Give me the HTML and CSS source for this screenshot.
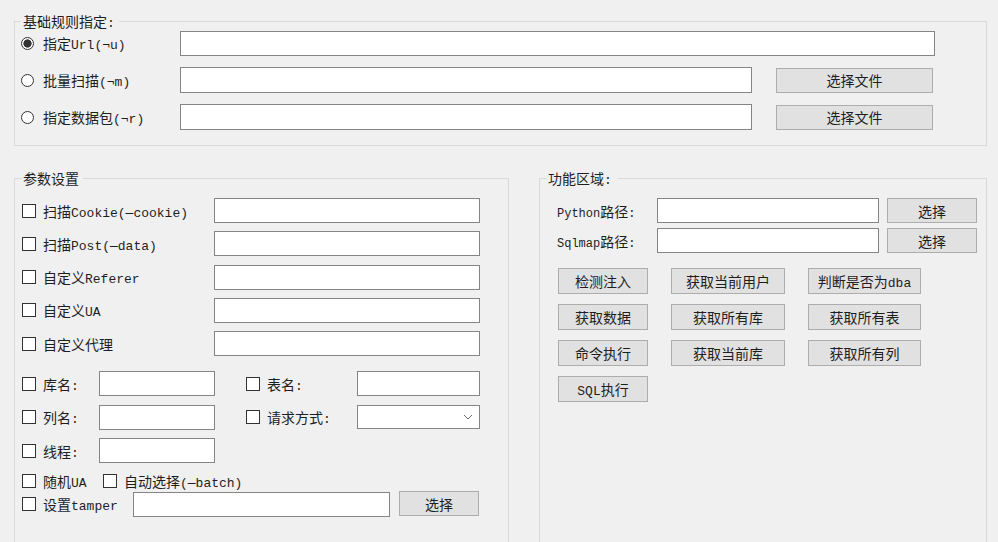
FILE: index.html
```html
<!DOCTYPE html>
<html lang="zh-CN">
<head>
<meta charset="utf-8">
<title>SQLMap GUI</title>
<link rel="stylesheet" href="styles.css">
</head>
<body>
<div class="app">
  <fieldset class="group group-top">
    <legend>基础规则指定<span class="en">:</span></legend>
    <div class="rule-rows">
      <div class="rule-row">
        <label class="opt opt-rule"><input type="radio" name="mode" class="radio" checked><span>指定<span class="en">Url(¬u)</span></span></label>
        <input type="text" class="field field-url">
      </div>
      <div class="rule-row">
        <label class="opt opt-rule"><input type="radio" name="mode" class="radio"><span>批量扫描<span class="en">(¬m)</span></span></label>
        <input type="text" class="field field-file">
        <button class="btn btn-file">选择文件</button>
      </div>
      <div class="rule-row">
        <label class="opt opt-rule"><input type="radio" name="mode" class="radio"><span>指定数据包<span class="en">(¬r)</span></span></label>
        <input type="text" class="field field-file">
        <button class="btn btn-file">选择文件</button>
      </div>
    </div>
  </fieldset>

  <div class="lower">
    <fieldset class="group group-params">
      <legend>参数设置</legend>
      <div class="sec sec-a">
        <div class="prow">
          <label class="opt col-wide"><input type="checkbox" class="check"><span>扫描<span class="en">Cookie(—cookie)</span></span></label>
          <input type="text" class="field field-wide">
        </div>
        <div class="prow">
          <label class="opt col-wide"><input type="checkbox" class="check"><span>扫描<span class="en">Post(—data)</span></span></label>
          <input type="text" class="field field-wide">
        </div>
        <div class="prow">
          <label class="opt col-wide"><input type="checkbox" class="check"><span>自定义<span class="en">Referer</span></span></label>
          <input type="text" class="field field-wide">
        </div>
        <div class="prow">
          <label class="opt col-wide"><input type="checkbox" class="check"><span>自定义<span class="en">UA</span></span></label>
          <input type="text" class="field field-wide">
        </div>
        <div class="prow">
          <label class="opt col-wide"><input type="checkbox" class="check"><span>自定义代理</span></label>
          <input type="text" class="field field-wide">
        </div>
      </div>

      <div class="sec sec-b">
        <div class="prow">
          <label class="opt col-s"><input type="checkbox" class="check"><span>库名<span class="en">:</span></span></label>
          <input type="text" class="field field-s">
          <label class="opt col-m"><input type="checkbox" class="check"><span>表名<span class="en">:</span></span></label>
          <input type="text" class="field field-m">
        </div>
        <div class="prow">
          <label class="opt col-s"><input type="checkbox" class="check"><span>列名<span class="en">:</span></span></label>
          <input type="text" class="field field-s">
          <label class="opt col-m"><input type="checkbox" class="check"><span>请求方式<span class="en">:</span></span></label>
          <div class="field field-m select">
            <svg class="chev" width="10" height="6" viewBox="0 0 10 6"><polyline points="1,1 5,5 9,1" fill="none" stroke="#6a6a6a" stroke-width="1"/></svg>
          </div>
        </div>
        <div class="prow">
          <label class="opt col-s"><input type="checkbox" class="check"><span>线程<span class="en">:</span></span></label>
          <input type="text" class="field field-s">
        </div>
      </div>

      <div class="sec sec-c">
        <div class="prow prow-flags">
          <label class="opt col-flag"><input type="checkbox" class="check"><span>随机<span class="en">UA</span></span></label>
          <label class="opt"><input type="checkbox" class="check"><span>自动选择<span class="en">(—batch)</span></span></label>
        </div>
        <div class="prow prow-tamper">
          <label class="opt col-tamper"><input type="checkbox" class="check"><span>设置<span class="en">tamper</span></span></label>
          <input type="text" class="field field-tamper">
          <button class="btn btn-tamper">选择</button>
        </div>
      </div>
    </fieldset>

    <fieldset class="group group-func">
      <legend>功能区域<span class="en">:</span></legend>
      <div class="func-body">
        <div class="paths">
          <div class="path-row">
            <span class="path-label"><span class="en">Python</span>路径<span class="en">:</span></span>
            <input type="text" class="field field-path">
            <button class="btn btn-path">选择</button>
          </div>
          <div class="path-row">
            <span class="path-label"><span class="en">Sqlmap</span>路径<span class="en">:</span></span>
            <input type="text" class="field field-path">
            <button class="btn btn-path">选择</button>
          </div>
        </div>
        <div class="actions">
          <button class="btn">检测注入</button>
          <button class="btn">获取当前用户</button>
          <button class="btn">判断是否为<span class="en">dba</span></button>
          <button class="btn">获取数据</button>
          <button class="btn">获取所有库</button>
          <button class="btn">获取所有表</button>
          <button class="btn">命令执行</button>
          <button class="btn">获取当前库</button>
          <button class="btn">获取所有列</button>
          <button class="btn"><span class="en">SQL</span>执行</button>
        </div>
      </div>
    </fieldset>
  </div>
</div>
</body>
</html>
```

FILE: styles.css
```css
* {
  box-sizing: border-box;
}

html,
body {
  margin: 0;
  height: 100%;
  overflow: hidden;
}

body {
  background: #f0f0f0;
  font-family: "Noto Sans CJK SC", "Noto Sans", sans-serif;
  font-size: 14px;
  line-height: 18px;
  color: #1e1e1e;
}

.en {
  font-family: "Liberation Mono", "DejaVu Sans Mono", monospace;
  font-size: 13px;
  line-height: 1;
}

.app {
  padding: 12px 0 0 14px;
  width: 987px;
}

/* group boxes */
.group {
  margin: 0;
  border: 1px solid #d9d9d9;
  min-width: 0;
}

.group legend {
  height: 18px;
  padding: 0 4px 0 2px;
  line-height: 18px;
  overflow: visible;
}

.group-top {
  width: 973px;
  padding: 0 6px 15px 6px;
}

.rule-rows {
  display: flex;
  flex-direction: column;
  gap: 11px;
}

.rule-row {
  display: flex;
  align-items: center;
  height: 26px;
}

/* controls */
.opt {
  display: flex;
  align-items: center;
  white-space: nowrap;
  flex: none;
}

.radio,
.check {
  appearance: none;
  -webkit-appearance: none;
  margin: 0 8px 0 0;
  width: 13px;
  height: 13px;
  border: 1px solid #333;
  background: #fff;
  flex: none;
}

.radio {
  border-radius: 50%;
  margin-right: 9px;
}

.radio:checked {
  background: radial-gradient(circle, #333 0, #333 3.8px, #fff 4.4px);
}

.check {
  width: 14px;
  height: 14px;
  margin-right: 7px;
}

.field {
  flex: none;
  height: 25px;
  margin: 0;
  padding: 0 4px;
  border: 1px solid #858585;
  background: #fff;
  font: inherit;
  outline: none;
}

.btn {
  flex: none;
  height: 25px;
  margin: 0;
  padding: 0;
  border: 1px solid #adadad;
  background: #e1e1e1;
  font: inherit;
  color: #1e1e1e;
  line-height: 18px;
}

/* top group */
.opt-rule {
  width: 159px;
}

.field-url {
  width: 755px;
}

.field-file {
  width: 572px;
  height: 26px;
}

.btn-file {
  width: 157px;
  margin-left: 24px;
}

/* lower part */
.lower {
  display: flex;
  gap: 30px;
  margin-top: 23px;
}

.group-params {
  width: 495px;
  height: 400px;
  padding: 11px 7px 0 7px;
}

.group-params legend {
  padding: 0 4px 0 1px;
}

.sec {
  display: flex;
  flex-direction: column;
}

.sec-a {
  gap: 8.25px;
}

.sec-b {
  gap: 8.5px;
  margin-top: 15px;
}

.sec-c {
  margin-top: 9px;
  gap: 1px;
}

.prow {
  display: flex;
  align-items: center;
  height: 25px;
}

.prow-flags {
  height: 18px;
}

.prow-tamper {
  height: 26px;
}

.col-wide {
  width: 192px;
}

.field-wide {
  width: 266px;
}

.col-s {
  width: 77px;
}

.field-s {
  width: 116px;
}

.col-m {
  width: 111px;
  margin-left: 31px;
}

.field-m {
  width: 123px;
}

.select {
  display: flex;
  align-items: center;
  justify-content: flex-end;
  padding-right: 6px;
  height: 24px;
}

.chev {
  display: block;
}

.col-flag {
  width: 81px;
}

.col-tamper {
  width: 111px;
}

.field-tamper {
  width: 257px;
}

.btn-tamper {
  width: 80px;
  margin-left: 9px;
  margin-top: -1px;
}

/* function group */
.group-func {
  width: 448px;
  height: 400px;
  padding: 11px 8px 0 7px;
}

.group-func legend {
  padding: 0 6px 0 1px;
}

.func-body {
  padding-left: 10px;
}

.paths {
  display: flex;
  flex-direction: column;
  gap: 5px;
}

.path-row {
  display: flex;
  align-items: center;
  height: 25px;
}

.path-label {
  width: 100px;
  flex: none;
  white-space: nowrap;
}

.path-label .en {
  font-size: 12px;
}

.field-path {
  width: 222px;
}

.btn-path {
  width: 90px;
  margin-left: 8px;
}

.actions {
  display: grid;
  grid-template-columns: 90px 114px 113px;
  grid-auto-rows: 26px;
  column-gap: 23px;
  row-gap: 10px;
  margin-top: 15px;
  margin-left: 1px;
}

.actions .btn {
  height: 26px;
}
```
